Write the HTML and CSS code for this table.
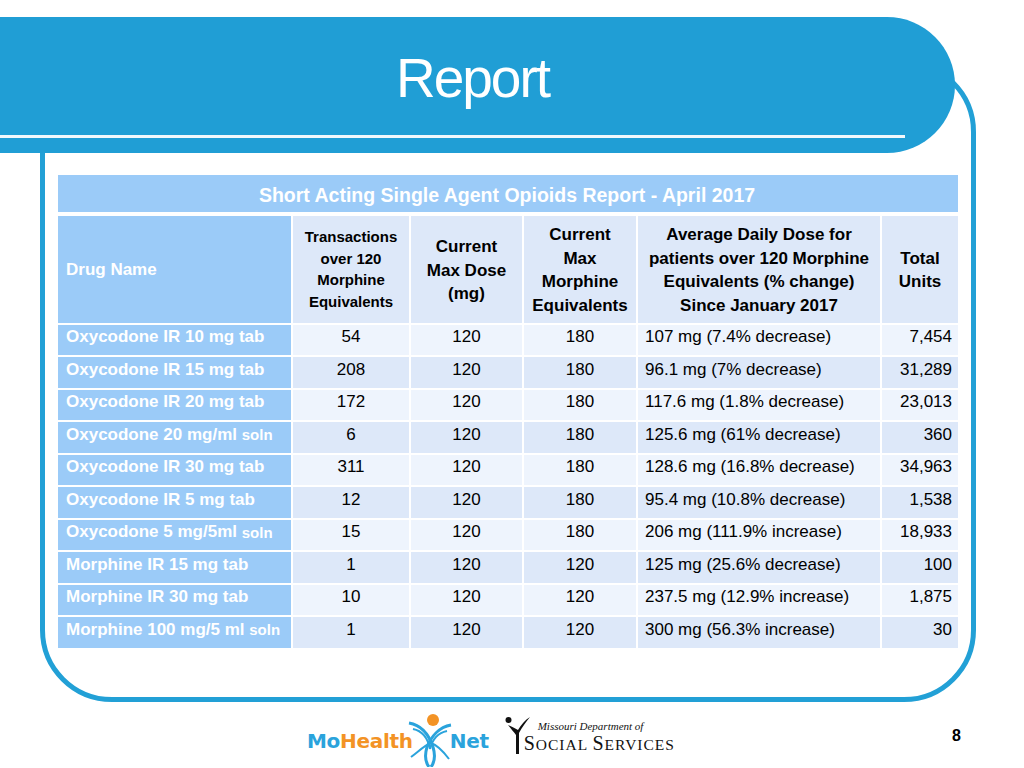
FILE: index.html
```html
<!DOCTYPE html>
<html>
<head>
<meta charset="utf-8">
<link rel="stylesheet" href="styles.css">
</head>
<body>
<div class="slide">
  <div class="frame"></div>
  <header class="band">
    <h1 class="title">Report</h1>
    <div class="rule"></div>
  </header>
  <main class="content">
    <div class="caption">Short Acting Single Agent Opioids Report - April 2017</div>
    <div class="grid">
      <div class="cell name hn">Drug Name</div>
      <div class="cell h h-small">Transactions<br>over 120<br>Morphine<br>Equivalents</div>
      <div class="cell h">Current<br>Max Dose<br>(mg)</div>
      <div class="cell h">Current<br>Max<br>Morphine<br>Equivalents</div>
      <div class="cell h">Average Daily Dose for<br>patients over 120 Morphine<br>Equivalents (% change)<br>Since January 2017</div>
      <div class="cell h">Total<br>Units</div>

      <div class="cell name">Oxycodone IR 10 mg tab</div>
      <div class="cell a">54</div><div class="cell a">120</div><div class="cell a">180</div>
      <div class="cell a l">107 mg (7.4% decrease)</div><div class="cell a r">7,454</div>

      <div class="cell name">Oxycodone IR 15 mg tab</div>
      <div class="cell b">208</div><div class="cell b">120</div><div class="cell b">180</div>
      <div class="cell b l">96.1 mg (7% decrease)</div><div class="cell b r">31,289</div>

      <div class="cell name">Oxycodone IR 20 mg tab</div>
      <div class="cell a">172</div><div class="cell a">120</div><div class="cell a">180</div>
      <div class="cell a l">117.6 mg (1.8% decrease)</div><div class="cell a r">23,013</div>

      <div class="cell name">Oxycodone 20 mg/ml&nbsp;<span class="sm">soln</span></div>
      <div class="cell b">6</div><div class="cell b">120</div><div class="cell b">180</div>
      <div class="cell b l">125.6 mg (61% decrease)</div><div class="cell b r">360</div>

      <div class="cell name">Oxycodone IR 30 mg tab</div>
      <div class="cell a">311</div><div class="cell a">120</div><div class="cell a">180</div>
      <div class="cell a l">128.6 mg (16.8% decrease)</div><div class="cell a r">34,963</div>

      <div class="cell name">Oxycodone IR 5 mg tab</div>
      <div class="cell b">12</div><div class="cell b">120</div><div class="cell b">180</div>
      <div class="cell b l">95.4 mg (10.8% decrease)</div><div class="cell b r">1,538</div>

      <div class="cell name">Oxycodone 5 mg/5ml&nbsp;<span class="sm">soln</span></div>
      <div class="cell a">15</div><div class="cell a">120</div><div class="cell a">180</div>
      <div class="cell a l">206 mg (111.9% increase)</div><div class="cell a r">18,933</div>

      <div class="cell name">Morphine IR 15 mg tab</div>
      <div class="cell b">1</div><div class="cell b">120</div><div class="cell b">120</div>
      <div class="cell b l">125 mg (25.6% decrease)</div><div class="cell b r">100</div>

      <div class="cell name">Morphine IR 30 mg tab</div>
      <div class="cell a">10</div><div class="cell a">120</div><div class="cell a">120</div>
      <div class="cell a l">237.5 mg (12.9% increase)</div><div class="cell a r">1,875</div>

      <div class="cell name">Morphine 100 mg/5 ml&nbsp;<span class="sm">soln</span></div>
      <div class="cell b">1</div><div class="cell b">120</div><div class="cell b">120</div>
      <div class="cell b l">300 mg (56.3% increase)</div><div class="cell b r">30</div>
    </div>
  </main>
  <footer class="footer">
    <div class="mohealth">
      <span class="mo">Mo</span><span class="health">Health</span>
      <svg class="mhfig" width="46" height="54" viewBox="0 0 46 54">
        <circle cx="26" cy="7" r="6" fill="#f39325"/>
        <path d="M2 10 C14 12 22 22 26 34 C29 44 27 50 24 54" fill="none" stroke="#2aa3dc" stroke-width="3"/>
        <path d="M6 16 C16 18 21 26 23 36" fill="none" stroke="#2aa3dc" stroke-width="2"/>
        <path d="M44 12 C32 14 24 24 20 34 C17 44 19 50 22 54" fill="none" stroke="#2aa3dc" stroke-width="3"/>
        <path d="M40 18 C30 20 25 28 23 36" fill="none" stroke="#2aa3dc" stroke-width="2"/>
        <path d="M4 44 C12 38 18 32 24 30 C30 32 36 38 42 46" fill="none" stroke="#2aa3dc" stroke-width="2"/>
      </svg>
      <span class="net">Net</span>
    </div>
    <div class="dss">
      <svg class="dssfig" width="26" height="40" viewBox="0 0 26 40">
        <circle cx="3.5" cy="5" r="3" fill="#111"/>
        <path d="M3 10 C6 14 9 17 11 20 L11 39 L14 39 L14 18 C17 12 21 7 25 2 C20 5 16 10 13 15 C10 13 7 12 3 10 Z" fill="#111"/>
      </svg>
      <div class="dsstext">
        <span class="dss1">Missouri Department of</span>
        <span class="dss2"><span class="big">S</span>OCIAL <span class="big">S</span>ERVICES</span>
      </div>
    </div>
    <div class="pagenum">8</div>
  </footer>
</div>
</body>
</html>
```
FILE: styles.css
```css
* { box-sizing: border-box; }
html, body { margin: 0; padding: 0; background: #fff; }
body { font-family: "Liberation Sans", Arial, sans-serif; }
.slide {
  position: relative;
  width: 1024px;
  height: 768px;
  overflow: hidden;
  padding-top: 17px;
}
.frame {
  position: absolute;
  left: 40px;
  top: 60px;
  width: 936px;
  height: 642px;
  border: 5px solid #22a0d6;
  border-radius: 72px;
}
.band {
  position: relative;
  z-index: 1;
  width: 955px;
  height: 136px;
  background: #209ed5;
  border-radius: 0 68px 68px 0 / 0 68px 68px 0;
  padding-top: 34px;
}
.title {
  margin: 0;
  width: 945px;
  text-align: center;
  color: #fff;
  font-weight: normal;
  font-size: 55px;
  line-height: 55px;
  letter-spacing: -2px;
}
.rule {
  margin-top: 29px;
  width: 905px;
  height: 3px;
  background: #f2f8fc;
}
.content {
  position: relative;
  z-index: 1;
  margin: 22px 0 0 58px;
  width: 900px;
}
.caption {
  height: 37px;
  background: #9bcbf8;
  color: #fff;
  font-weight: bold;
  font-size: 19.5px;
  display: flex;
  align-items: center;
  justify-content: center;
  margin-bottom: 4px;
  padding-top: 4px;
  padding-right: 2px;
}
.grid {
  display: grid;
  grid-template-columns: 233px 116px 111px 112px 242px 76px;
  grid-template-rows: 106.5px;
  grid-auto-rows: 30.5px;
  gap: 2px;
}
.cell {
  display: flex;
  align-items: center;
  justify-content: center;
  text-align: center;
  font-size: 17px;
  color: #000;
  padding-bottom: 5px;
}
.name {
  background: #9bcbf8;
  color: #fff;
  font-weight: bold;
  justify-content: flex-start;
  padding-left: 8px;
  white-space: nowrap;
}
.hn { padding-bottom: 0; padding-top: 2px; }
.sm { font-size: 15px; }
.h {
  background: #dde8f9;
  font-weight: bold;
  font-size: 17px;
  line-height: 23.5px;
  padding-top: 2px;
  padding-bottom: 0;
}
.h-small {
  font-size: 15px;
  line-height: 21.5px;
  padding-top: 0;
}
.a { background: #eef4fd; }
.b { background: #dde8f9; }
.l { justify-content: flex-start; padding-left: 7px; }
.r { justify-content: flex-end; padding-right: 6px; }
.footer {
  position: relative;
  display: flex;
  align-items: flex-start;
  margin-top: 66px;
  padding-left: 307px;
}
.mohealth {
  display: flex;
  align-items: center;
  height: 54px;
  font-family: "DejaVu Sans", sans-serif;
  font-weight: bold;
  font-size: 20px;
  letter-spacing: -0.3px;
}
.mo { color: #2aa3dc; }
.health { color: #f39325; }
.net { color: #2aa3dc; margin-left: 1px; }
.mhfig { margin: 0 -4px 0 -6px; align-self: flex-start; margin-top: -1px; }
.dss {
  display: flex;
  align-items: flex-end;
  margin-left: 16px;
  margin-top: 1px;
}
.dssfig { display: block; }
.dsstext {
  display: flex;
  flex-direction: column;
  margin-left: -14px;
  font-family: "Liberation Serif", serif;
  color: #111;
}
.dss1 {
  font-style: italic;
  font-size: 11px;
  line-height: 13px;
  padding-left: 21px;
}
.dss2 {
  font-size: 15.5px;
  line-height: 20px;
  padding-left: 7px;
  letter-spacing: 1px;
  white-space: nowrap;
}
.big { font-size: 20px; }
.pagenum {
  margin-left: auto;
  margin-right: 63px;
  margin-top: 13px;
  font-weight: bold;
  font-size: 16px;
}
```
